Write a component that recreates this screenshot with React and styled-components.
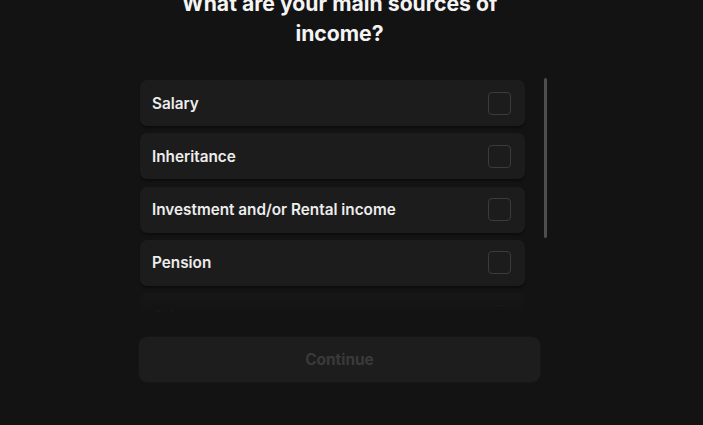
import React from "react";
import styled, { createGlobalStyle } from "styled-components";

const Global = createGlobalStyle`
  html, body { margin: 0; padding: 0; background: #131313; }
  body { font-family: Inter, "Noto Sans", sans-serif; -webkit-font-smoothing: antialiased; overflow: hidden; }
`;

const Page = styled.div`
  width: 703px;
  height: 425px;
  overflow: hidden;
  padding-left: 139px;
  box-sizing: border-box;
`;

const Column = styled.div`
  width: 401px;
  display: flex;
  flex-direction: column;
`;

const Title = styled.h1`
  margin: -12px 0 0;
  font-size: 21.2px;
  line-height: 30px;
  font-weight: 700;
  color: #f4f4f4;
  text-align: center;
`;

const ScrollArea = styled.div`
  position: relative;
  margin-top: 30px;
  width: 411px;
  height: 238px;
  overflow: hidden;
`;

const List = styled.div`
  display: flex;
  flex-direction: column;
  gap: 7.3px;
  padding: 2px 0 0 1px;
`;

const Row = styled.div`
  width: 385px;
  height: 46px;
  box-sizing: border-box;
  display: flex;
  align-items: center;
  justify-content: space-between;
  padding: 0 14px 0 12px;
  background: #1c1c1c;
  border-radius: 7px;
  box-shadow: 0 2px 2px rgba(0, 0, 0, 0.35);
  flex-shrink: 0;
`;

const Label = styled.span`
  font-size: 15.3px;
  font-weight: 600;
  color: #ededed;
`;

const Box = styled.span`
  width: 23px;
  height: 23px;
  box-sizing: border-box;
  border: 1.5px solid #3b3b3b;
  border-radius: 4px;
`;

const Fade = styled.div`
  position: absolute;
  left: 0;
  right: 0;
  bottom: 0;
  height: 26px;
  background: linear-gradient(to bottom, rgba(19, 19, 19, 0.55), #131313 85%);
  pointer-events: none;
`;

const Thumb = styled.div`
  position: absolute;
  left: 405px;
  top: 0;
  width: 3px;
  height: 160px;
  border-radius: 2px;
  background: #4d4d4d;
`;

const Continue = styled.button`
  margin-top: 21px;
  width: 401px;
  height: 45px;
  border: none;
  border-radius: 8px;
  background: #1d1d1d;
  color: #3a3a3a;
  font-family: Inter, "Noto Sans", sans-serif;
  font-size: 15.4px;
  font-weight: 700;
  box-shadow: 0 0 0 1px rgba(255, 255, 255, 0.015);
`;

const options = [
  "Salary",
  "Inheritance",
  "Investment and/or Rental income",
  "Pension",
  "Other",
];

export default function App() {
  return (
    <>
      <Global />
      <Page>
        <Column>
          <Title>
            What are your main sources of
            <br />
            income?
          </Title>
          <ScrollArea>
            <List>
              {options.map((o) => (
                <Row key={o}>
                  <Label>{o}</Label>
                  <Box />
                </Row>
              ))}
            </List>
            <Fade />
            <Thumb />
          </ScrollArea>
          <Continue disabled>Continue</Continue>
        </Column>
      </Page>
    </>
  );
}
